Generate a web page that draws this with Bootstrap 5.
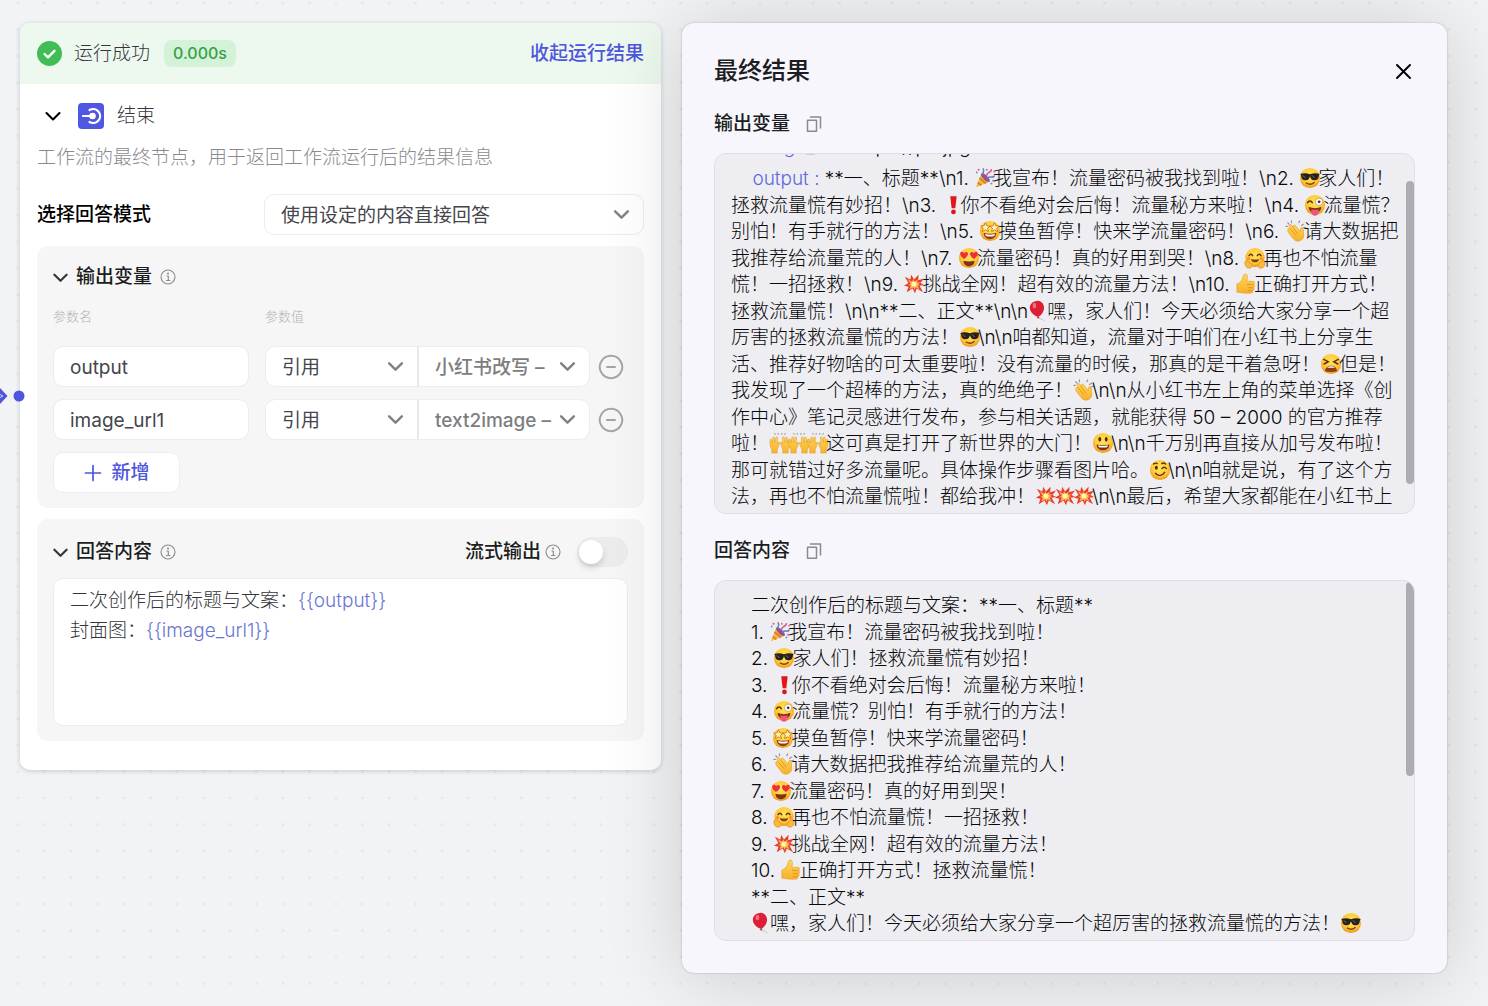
<!DOCTYPE html>
<html lang="zh-CN">
<head>
<meta charset="utf-8">
<meta name="viewport" content="width=device-width, initial-scale=1">
<title>最终结果</title>
<link href="https://cdn.jsdelivr.net/npm/bootstrap@5.3.0/dist/css/bootstrap.min.css" rel="stylesheet">
<style>
body{font-family:Inter,"Noto Sans CJK SC",sans-serif;font-size:19px;font-weight:300;line-height:26px;color:#35363c;background:#f1f3f5 url("data:image/svg+xml,%3Csvg xmlns='http://www.w3.org/2000/svg' width='53' height='53' viewBox='0 0 106 106'%3E%3Cg fill='%23e6e8eb'%3E%3Ccircle cx='26' cy='26' r='3'/%3E%3Ccircle cx='79' cy='26' r='3'/%3E%3Ccircle cx='26' cy='79' r='3'/%3E%3Ccircle cx='79' cy='79' r='3'/%3E%3C/g%3E%3C/svg%3E") 5px -10px;overflow:hidden}
button,input,select{font-weight:inherit}
svg{flex:none;display:block}
.ln{fill:none;stroke:currentColor;stroke-linecap:round;stroke-linejoin:round}
.board{padding:23px 41px 33px 20px;gap:21px}
.node-card{flex:641 1 641px;min-width:0;background:#fff;border-radius:10px;box-shadow:0 1px 5px rgba(30,35,50,.2)}
.run-head{height:61px;padding:0 17px;background:#edf9ef;border-radius:10px 10px 0 0}
.time-tag{background:#d3f2d7;color:#35a046;font-size:16px;font-weight:500;line-height:27px;padding:0 9px;border-radius:8px;margin-left:14px}
.fold-link{color:#4e56dc;font-weight:500;text-decoration:none}
.node-body{padding:19px 17px 29px}
.ttl{font-weight:500;color:#1c1d22}
.mode-row{margin-top:23px}
.mode-pick{width:380px}
.ctl{height:41px;border:1px solid #ededee;border-radius:10px;background-color:#fff;font-size:19px;line-height:26px;padding:7px 16px 5px;color:#45464c}
.form-select.ctl{padding-right:36px;background-image:url("data:image/svg+xml,%3Csvg xmlns='http://www.w3.org/2000/svg' viewBox='0 0 16 16'%3E%3Cpath d='M2 5l6 6 6-6' fill='none' stroke='%23818286' stroke-width='2.3' stroke-linecap='round' stroke-linejoin='round'/%3E%3C/svg%3E");background-size:17px 17px;background-position:right 13px center}
.sect{background:#f6f6f6;border-radius:11px;padding:18px 16px 15px;margin-top:11px}
.col-name{flex:0 0 196px;width:196px}
.tiny-lab{font-size:13px;line-height:20px;color:#b3b3b6}
.ref-a{width:152px;flex:none;border-radius:10px 0 0 10px;border-right:0}
.form-select.ref-b{flex:1;min-width:0;border-radius:0 10px 10px 0;border-left:2px solid #e8e8e9;color:#7d7d80;font-weight:500}
.plain-btn{border:0;background:none;padding:0;line-height:0}
.hint{color:#8a8b8f}
.add-btn{width:127px;height:41px;border:1px solid #ecedf3;border-radius:10px;background:#fff;color:#4e56dc;font-weight:500;font-size:19px}
.sw{appearance:none;width:51px;height:30px;border-radius:15px;background:#ececec;margin:0;display:flex;align-items:center;padding-left:2px}
.sw::before{content:"";width:24px;height:24px;border-radius:50%;background:#fff;box-shadow:0 4px 6px rgba(0,0,0,.14)}
.editor{height:148px;margin-top:11px;border:1px solid #ececed;border-radius:10px;background:#fff;padding:7px 16px;line-height:30px;outline:0}
.tok{color:#6a76cf}
.result{flex:765 1 765px;min-width:0;background:#f7f6fc;border-radius:12px;padding:32px;box-shadow:0 0 2px rgba(0,0,0,.28),0 4px 80px rgba(0,0,0,.16);position:relative}
.result h1{font-size:24px;line-height:32px;font-weight:500;color:#1c1d22;margin:0}
.out-box{position:relative;height:361px;border:1px solid #dfdfe4;border-radius:12px;background:#eeeef2;overflow:hidden;padding:0 16px 3px;color:#08080a;white-space:pre}
.out-lines{height:344px;flex:none}
.prev-line{margin-bottom:6px}
.key{color:#6068dd}
.thumb{position:absolute;right:0;width:8px;border-radius:4px;background:#adadb1}
.emo{display:inline-block;width:22px;height:22px;vertical-align:-4px;margin:0 -3px 0 0}
.link-in{position:absolute;left:0;top:384px}
</style>
</head>
<body>
<svg width="0" height="0" class="position-absolute" aria-hidden="true">
<defs>
<radialGradient id="gf" cx=".5" cy=".4" r=".6"><stop offset="0" stop-color="#ffe45c"/><stop offset=".65" stop-color="#ffcb35"/><stop offset="1" stop-color="#ee9420"/></radialGradient>
<linearGradient id="gh" x1="0" y1="0" x2="0" y2="1"><stop offset="0" stop-color="#ffd653"/><stop offset="1" stop-color="#f7b02c"/></linearGradient>
<symbol id="chev" viewBox="0 0 16 16"><path class="ln" d="M1.500 5l6.500 6.500 6.500-6.500"/></symbol>
<symbol id="info" viewBox="0 0 16 16"><g class="ln" stroke-width="1.100"><circle cx="8" cy="8" r="7"/><path d="M7 7h1.300v4.500M6.500 11.500h3.400"/></g><circle cx="8" cy="4.600" r="1" fill="currentColor"/></symbol>
<symbol id="copy" viewBox="0 0 16 16"><path class="ln" stroke-width="1.500" d="M1.500 4.200h9v11h-9zM4.500 1h10v11"/></symbol>
<symbol id="minus" viewBox="0 0 26 26"><path class="ln" stroke-width="2" d="M13 1.800a11.200 11.200 0 1 0 .01 0zM9 13h8"/></symbol>
<symbol id="tada" viewBox="0 0 24 24"><path d="M2 22L8 7l9 9z" fill="#f2b93b"/><path d="M4 17l4 3M6 12l7 6M8 8l7 8" stroke="#d97b2c" stroke-width="1.800"/><ellipse cx="12.500" cy="11.500" rx="2.500" ry="6.300" transform="rotate(-45 12.500 11.500)" fill="#96528c"/><g fill="none" stroke-width="1.700" stroke-linecap="round"><path d="M10 8c-1-3 2-3 0-6" stroke="#5b7fd6"/><path d="M14 9c0-4 4-2 5-6" stroke="#d45a9c"/><path d="M15 12c3-3 4 1 7-2" stroke="#5b7fd6"/></g><g fill="#e3665c"><circle cx="5" cy="3" r="1.200"/><circle cx="14" cy="3" r="1"/><circle cx="21" cy="15" r="1.200"/><circle cx="22" cy="5" r="1"/></g><g fill="#5b93df"><circle cx="3" cy="6" r="1"/><circle cx="19" cy="18" r="1.100"/></g></symbol>
<symbol id="cool" viewBox="0 0 24 24"><circle cx="12" cy="12" r="11" fill="url(#gf)"/><path d="M1.500 7.500c4-1 7-.8 10.500.5 3.500-1.300 6.500-1.500 10.500-.5l-.8 1.700c-.4 4-2 5.300-4.900 5.300-3 0-4.100-2-4.800-4.500-.7 2.500-1.800 4.500-4.800 4.500-2.900 0-4.500-1.300-4.900-5.300z" fill="#262021"/><path d="M4 9l3 3M14 9l3 3" stroke="#777" stroke-width="1"/><path d="M8 17.500c3 2 6 1.600 8.500-.7" fill="none" stroke="#7c3d12" stroke-width="1.500" stroke-linecap="round"/></symbol>
<symbol id="bang" viewBox="0 0 24 24"><path d="M9 2.500h7l-1.500 13h-4z" fill="#e3141c"/><circle cx="12.500" cy="19.500" r="2.600" fill="#e3141c"/></symbol>
<symbol id="zany" viewBox="0 0 24 24"><circle cx="12" cy="12" r="11" fill="url(#gf)"/><path d="M5 14c4 2 10 2 14 0 0 4-3 7-7 7s-7-3-7-7z" fill="#7b3516"/><path d="M8 16.500c3 .8 5 .8 8 0V20c0 5-8 5-8 0z" fill="#f25576"/><path d="M4 9.500c1.500-2.500 3.500-2.500 5 0" fill="none" stroke="#5c3010" stroke-width="1.700" stroke-linecap="round"/><circle cx="16.500" cy="8.500" r="4" fill="#fff" stroke="#a98b62" stroke-width=".7"/><circle cx="16.500" cy="8.500" r="1.500" fill="#4a2c17"/></symbol>
<symbol id="star" viewBox="0 0 24 24"><circle cx="12" cy="12" r="11" fill="url(#gf)"/><path d="M5 14c4 1.500 10 1.500 14 0 0 4-3 7-7 7s-7-3-7-7z" fill="#8b3d18"/><path d="M6.500 15.400c3.500 1 7.500 1 11 0l-1 2c-3 .8-6 .8-9 0z" fill="#fff"/><path d="M7 3l1.500 3.300 3.600.3-2.700 2.500.9 3.600L7 10.800l-3.300 1.900.9-3.600L1.900 6.600l3.600-.3z" fill="#fff3b0" stroke="#c56a17" stroke-width=".9"/><path d="M17 3l1.500 3.300 3.600.3-2.700 2.500.9 3.600-3.300-1.900-3.300 1.900.9-3.600-2.700-2.500 3.600-.3z" fill="#fff3b0" stroke="#c56a17" stroke-width=".9"/></symbol>
<symbol id="clap" viewBox="0 0 24 24"><path d="M3 11c0-2 2-2.500 3-1L4.500 7C4 5 6.200 4 7.300 5.700L9 8c-.8-2.300 1.500-3.200 2.600-1.700l5 6.200.4-3c.3-2 2.800-1.700 2.900.3l.6 6.200c.3 3-1 5-3.500 6.300-2.800 1.500-6 .8-8-1.800l-5-6.500C3 12.800 3 12 3 11z" fill="url(#gh)" stroke="#df9324" stroke-width=".6"/><path d="M6 10l6 7M8.500 8l6 7.500" stroke="#d98c1f" stroke-width=".9"/><path d="M3 3l1.500 1.500M7 1v2M1 7h1.500M15 3l1-2M18 6l2.500-1.500M20 8.500l2.500-.5" stroke="#8d8f98" stroke-width="1.200" stroke-linecap="round"/></symbol>
<symbol id="love" viewBox="0 0 24 24"><circle cx="12" cy="12" r="11" fill="url(#gf)"/><path d="M6 15c4 1 8 1 12 0 0 3.500-2.500 6-6 6s-6-2.500-6-6z" fill="#7b3516"/><path d="M6.500 13C1 9.500 2 5.500 4 5.200c1.500-.2 2.300.8 2.700 1.700.6-.9 1.600-1.700 3-1.300 2 .6 2 4.400-3.200 7.400zM17.500 13c5.500-3.500 4.500-7.500 2.500-7.800-1.500-.2-2.300.8-2.700 1.700-.6-.9-1.600-1.700-3-1.300-2 .6-2 4.400 3.200 7.400z" fill="#ee2d3e"/></symbol>
<symbol id="hug" viewBox="0 0 24 24"><circle cx="12" cy="11.500" r="10.500" fill="url(#gf)"/><path d="M5.500 9.500c1-2 3-2 4 0M14.500 9.500c1-2 3-2 4 0" fill="none" stroke="#5c3010" stroke-width="1.600" stroke-linecap="round"/><path d="M7.500 13c3 1 6 1 9 0-.5 5-8.500 5-9 0z" fill="#8b3d18"/><circle cx="5" cy="12.500" r="1.700" fill="#f58a3c"/><circle cx="19" cy="12.500" r="1.700" fill="#f58a3c"/><path d="M1 17c0-2 2-3 3.500-1.500L8 18c1.500 1.500 1 5-2 5-3 .3-5-2-5-6zM23 17c0-2-2-3-3.500-1.500L16 18c-1.500 1.500-1 5 2 5 3 .3 5-2 5-6z" fill="#f9b93c" stroke="#d98a20" stroke-width=".8"/></symbol>
<symbol id="boom" viewBox="0 0 24 24"><path d="M2 4l6 3 1-5 3 5 5-5-.5 6L23 6l-4 5 4 2-5 1 4 7-7-4-2 5-2.500-5L4 21l2-6-5-1 5-3z" fill="#e83b2e"/><path d="M5 6.500l5 3 1-3 1.500 3L16 7l-.5 3.500 4-1-3 2.500 2 1-2.500 1 2 4-4-2.500-1.500 3-1-3L7 18l1.500-4-3-1 3-1z" fill="#fdb94a"/><circle cx="12" cy="12" r="2.800" fill="#fff3b5"/></symbol>
<symbol id="like" viewBox="0 0 24 24"><path d="M2 12c2-1 4-2 5.500-4.500C9 5 9 1 11 1c3 0 3 3.500 2 8h6.500c2 0 2.500 2.600 1 3.500 1.500.8 1.300 3-.2 3.500 1 1 .6 2.700-.8 3.200.5 1.600-.5 2.800-2.500 2.800h-6C7 22 6 21 2 21z" fill="url(#gh)" stroke="#e09a28" stroke-width=".6"/><path d="M13 12.500h7M14 16h6M14 19.200h5" stroke="#dc9222" stroke-width=".9"/></symbol>
<symbol id="ball" viewBox="0 0 24 24"><path d="M11 18c1 3 4 2 7 5" stroke="#b9b9c0" fill="none" stroke-width=".9"/><path d="M9.500 1C14 .5 17.500 4 17.500 8.500c0 4-3 8.500-6.500 10C6 17 2 13 2 8.500 2 4.500 5 1.400 9.500 1z" fill="#dc1f35"/><ellipse cx="7" cy="6" rx="2" ry="3" fill="#f2707b"/><path d="M9.500 20l1.500-2 1.500 2z" fill="#b8142a"/></symbol>
<symbol id="tired" viewBox="0 0 24 24"><circle cx="12" cy="12" r="11" fill="url(#gf)"/><path d="M4 7l5 2.500L4.500 12M20 7l-5 2.500 4.500 2.500" fill="none" stroke="#5c3010" stroke-width="1.600" stroke-linecap="round"/><path d="M5.500 20c0-8 13-8 13 0-4 1-9 1-13 0z" fill="#8b3d18"/><path d="M7.500 16c3-2 6-2 9 0z" fill="#fff"/></symbol>
<symbol id="hands" viewBox="0 0 24 24"><path d="M1 9c0-1.500 1.700-1.500 2 0l.7 3L4 6.500c0-1.500 2-1.500 2 0l.3 5L7.500 6c.4-1.400 2-1 1.900.4L9 13l1-1.500c1-1 2 0 1.500 1.200L9 19v4H3v-4c-2-3-2-6-2-10z" fill="url(#gh)" stroke="#df9324" stroke-width=".5"/><path d="M23 9c0-1.500-1.700-1.500-2 0l-.7 3-.3-5.500c0-1.500-2-1.500-2 0l-.3 5L16.500 6c-.4-1.400-2-1-1.900.4L15 13l-1-1.500c-1-1-2 0-1.500 1.200L15 19v4h6v-4c2-3 2-6 2-10z" fill="url(#gh)" stroke="#df9324" stroke-width=".5"/><path d="M7 3L6 1M10 3V1M14 3V1M17 3l1-2" stroke="#8d8f98" stroke-width="1"/></symbol>
<symbol id="smile" viewBox="0 0 24 24"><circle cx="12" cy="12" r="11" fill="url(#gf)"/><ellipse cx="8.500" cy="8" rx="1.500" ry="2.500" fill="#4a2c17"/><ellipse cx="15.500" cy="8" rx="1.500" ry="2.500" fill="#4a2c17"/><path d="M5 13.500c4 1 10 1 14 0 0 4-3 6.500-7 6.500s-7-2.500-7-6.500z" fill="#7b3516"/><path d="M6.500 14.500c3.500.8 7.500.8 11 0l-1 2c-3 .6-6 .6-9 0z" fill="#fff"/></symbol>
<symbol id="wink" viewBox="0 0 24 24"><circle cx="12" cy="12" r="11" fill="url(#gf)"/><ellipse cx="8" cy="9.500" rx="1.600" ry="2.200" fill="#4a2c17"/><path d="M5 5.500c1.500-1.300 2.500-1.300 4-.5M14 5c1.500-1 3-.5 4 .5M14 10.500c1.500-2 3.500-2 5 0M7 15.500c3 3.500 7.500 3 10-1" fill="none" stroke="#5c3010" stroke-width="1.500" stroke-linecap="round"/></symbol>
</defs>
</svg>

<main class="board d-flex align-items-start">
  <section class="node-card">
    <header class="run-head d-flex align-items-center">
      <svg width="25" height="25" viewBox="0 0 25 25"><circle cx="12.500" cy="12.500" r="12.500" fill="#41bd58"/><path class="ln text-white" d="M7.500 13l3.500 3.300 6.500-6.500" stroke-width="2.400"/></svg>
      <span class="ms-2 ps-1">运行成功</span>
      <span class="time-tag">0.000s</span>
      <a href="#" class="fold-link ms-auto">收起运行结果</a>
    </header>
    <div class="node-body">
      <div class="d-flex align-items-center ps-2">
        <button class="plain-btn" aria-label="折叠"><svg width="16" height="16" stroke-width="2.100"><use href="#chev"/></svg></button>
        <svg class="ms-3 me-2" width="28" height="26" viewBox="-1 0 28 26"><rect width="26" height="26" rx="4" fill="#4e56e2"/><g fill="none" stroke="#fff" stroke-width="2.200" stroke-linecap="round"><path d="M5 13h6M11.500 7a7 7 0 1 1 0 12"/></g><circle cx="14.500" cy="13" r="3.300" fill="#fff"/></svg>
        <span class="ps-1">结束</span>
      </div>
      <p class="hint mt-3 mb-0">工作流的最终节点，用于返回工作流运行后的结果信息</p>
      <div class="mode-row d-flex align-items-center">
        <label for="mode" class="ttl text-black col-name me-auto">选择回答模式</label>
        <select id="mode" class="form-select ctl mode-pick"><option>使用设定的内容直接回答</option></select>
      </div>

      <section class="sect">
        <div class="d-flex align-items-center">
          <svg width="15" height="15" stroke-width="2.300"><use href="#chev"/></svg>
          <span class="ttl ms-2">输出变量</span>
          <svg class="ms-2 hint" width="16" height="16"><use href="#info"/></svg>
        </div>
        <div class="d-flex tiny-lab mt-3 mb-3 pb-1 gap-3"><span class="col-name">参数名</span><span>参数值</span></div>
        <div class="d-flex align-items-center mb-2 pb-1">
          <input class="form-control ctl col-name me-3" value="output" aria-label="参数名 1">
          <select class="form-select ctl ref-a" aria-label="类型 1"><option>引用</option></select>
          <select class="form-select ctl ref-b" aria-label="参数值 1"><option>小红书改写 –</option></select>
          <button class="plain-btn hint ms-2 me-1" aria-label="删除 1"><svg width="26" height="26" opacity=".75"><use href="#minus"/></svg></button>
        </div>
        <div class="d-flex align-items-center mb-2 pb-1">
          <input class="form-control ctl col-name me-3" value="image_url1" aria-label="参数名 2">
          <select class="form-select ctl ref-a" aria-label="类型 2"><option>引用</option></select>
          <select class="form-select ctl ref-b" aria-label="参数值 2"><option>text2image –</option></select>
          <button class="plain-btn hint ms-2 me-1" aria-label="删除 2"><svg width="26" height="26" opacity=".75"><use href="#minus"/></svg></button>
        </div>
        <button class="add-btn d-flex align-items-center justify-content-center gap-2"><svg width="20" height="20" viewBox="0 0 20 20"><path class="ln" stroke-width="1.700" d="M10 2.500v15M2.500 10h15"/></svg>新增</button>
      </section>

      <section class="sect">
        <div class="d-flex align-items-center">
          <svg width="15" height="15" stroke-width="2.300"><use href="#chev"/></svg>
          <span class="ttl ms-2">回答内容</span>
          <svg class="ms-2 hint" width="16" height="16"><use href="#info"/></svg>
          <label for="stream" class="ttl ms-auto">流式输出</label>
          <svg class="ms-1 me-3 hint" width="16" height="16"><use href="#info"/></svg>
          <input id="stream" type="checkbox" role="switch" class="sw">
        </div>
        <div class="editor" contenteditable="true" role="textbox" aria-label="回答内容">二次创作后的标题与文案：<span class="tok">{{output}}</span><br>封面图：<span class="tok">{{image_url1}}</span></div>
      </section>
    </div>
  </section>

  <aside class="result">
    <div class="d-flex align-items-center justify-content-between">
      <h1>最终结果</h1>
      <button class="plain-btn text-black me-1" aria-label="关闭"><svg width="15" height="15" viewBox="0 0 15 15"><path class="ln" stroke-width="1.900" d="M1 1l13 13M14 1L1 14"/></svg></button>
    </div>
    <div class="d-flex align-items-center mt-4"><span class="ttl">输出变量</span><button class="plain-btn ms-3 hint" aria-label="复制输出变量"><svg width="16" height="16"><use href="#copy"/></svg></button></div>
    <div class="out-box mt-3 d-flex flex-column justify-content-end">
      <div class="prev-line"><span class="key">    image_url :</span> https://p3.jpg</div>
      <div class="out-lines d-flex flex-column justify-content-between">
<div>    <span class="key">output :</span> **一、标题**\n1. <svg class="emo"><use href="#tada"/></svg>我宣布！流量密码被我找到啦！\n2. <svg class="emo"><use href="#cool"/></svg>家人们！</div>
<div>拯救流量慌有妙招！\n3. <svg class="emo"><use href="#bang"/></svg>你不看绝对会后悔！流量秘方来啦！\n4. <svg class="emo"><use href="#zany"/></svg>流量慌？</div>
<div>别怕！有手就行的方法！\n5. <svg class="emo"><use href="#star"/></svg>摸鱼暂停！快来学流量密码！\n6. <svg class="emo"><use href="#clap"/></svg>请大数据把</div>
<div>我推荐给流量荒的人！\n7. <svg class="emo"><use href="#love"/></svg>流量密码！真的好用到哭！\n8. <svg class="emo"><use href="#hug"/></svg>再也不怕流量</div>
<div>慌！一招拯救！\n9. <svg class="emo"><use href="#boom"/></svg>挑战全网！超有效的流量方法！\n10. <svg class="emo"><use href="#like"/></svg>正确打开方式！</div>
<div>拯救流量慌！\n\n**二、正文**\n\n<svg class="emo"><use href="#ball"/></svg>嘿，家人们！今天必须给大家分享一个超</div>
<div>厉害的拯救流量慌的方法！<svg class="emo"><use href="#cool"/></svg>\n\n咱都知道，流量对于咱们在小红书上分享生</div>
<div>活、推荐好物啥的可太重要啦！没有流量的时候，那真的是干着急呀！<svg class="emo"><use href="#tired"/></svg>但是！</div>
<div>我发现了一个超棒的方法，真的绝绝子！<svg class="emo"><use href="#clap"/></svg>\n\n从小红书左上角的菜单选择《创</div>
<div>作中心》笔记灵感进行发布，参与相关话题，就能获得 50 – 2000 的官方推荐</div>
<div>啦！<svg class="emo"><use href="#hands"/></svg><svg class="emo"><use href="#hands"/></svg><svg class="emo"><use href="#hands"/></svg>这可真是打开了新世界的大门！<svg class="emo"><use href="#smile"/></svg>\n\n千万别再直接从加号发布啦！</div>
<div>那可就错过好多流量呢。具体操作步骤看图片哈。<svg class="emo"><use href="#wink"/></svg>\n\n咱就是说，有了这个方</div>
<div>法，再也不怕流量慌啦！都给我冲！<svg class="emo"><use href="#boom"/></svg><svg class="emo"><use href="#boom"/></svg><svg class="emo"><use href="#boom"/></svg>\n\n最后，希望大家都能在小红书上</div>
      </div>
      <span class="thumb" style="top:27px;height:303px"></span>
    </div>
    <div class="d-flex align-items-center mt-4"><span class="ttl">回答内容</span><button class="plain-btn ms-3 hint" aria-label="复制回答内容"><svg width="16" height="16"><use href="#copy"/></svg></button></div>
    <div class="out-box mt-3 d-flex flex-column justify-content-end">
      <div class="out-lines d-flex flex-column justify-content-between ps-3 ms-1">
<div>二次创作后的标题与文案：**一、标题**</div>
<div>1. <svg class="emo"><use href="#tada"/></svg>我宣布！流量密码被我找到啦！</div>
<div>2. <svg class="emo"><use href="#cool"/></svg>家人们！拯救流量慌有妙招！</div>
<div>3. <svg class="emo"><use href="#bang"/></svg>你不看绝对会后悔！流量秘方来啦！</div>
<div>4. <svg class="emo"><use href="#zany"/></svg>流量慌？别怕！有手就行的方法！</div>
<div>5. <svg class="emo"><use href="#star"/></svg>摸鱼暂停！快来学流量密码！</div>
<div>6. <svg class="emo"><use href="#clap"/></svg>请大数据把我推荐给流量荒的人！</div>
<div>7. <svg class="emo"><use href="#love"/></svg>流量密码！真的好用到哭！</div>
<div>8. <svg class="emo"><use href="#hug"/></svg>再也不怕流量慌！一招拯救！</div>
<div>9. <svg class="emo"><use href="#boom"/></svg>挑战全网！超有效的流量方法！</div>
<div>10. <svg class="emo"><use href="#like"/></svg>正确打开方式！拯救流量慌！</div>
<div>**二、正文**</div>
<div><svg class="emo"><use href="#ball"/></svg>嘿，家人们！今天必须给大家分享一个超厉害的拯救流量慌的方法！<svg class="emo"><use href="#cool"/></svg></div>
      </div>
      <span class="thumb" style="top:1px;height:194px"></span>
    </div>
  </aside>
</main>
<svg class="link-in" width="26" height="24" viewBox="0 0 26 24"><path d="M0 4l7.500 8L0 20z" fill="#4e56dc"/><path d="M0 10.500l3 1.500-3 1.500" fill="none" stroke="#cfd2f5"/><circle cx="19" cy="12" r="5.500" fill="#4e56dc"/></svg>
<script src="https://cdn.jsdelivr.net/npm/bootstrap@5.3.0/dist/js/bootstrap.bundle.min.js"></script>
</body>
</html>
